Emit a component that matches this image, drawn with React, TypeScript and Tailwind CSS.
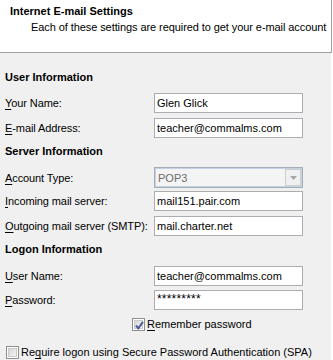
import React from 'react';

const inputBox = 'h-[20px] w-[149px] border border-[#abadb3] bg-white px-[2px] flex items-center';

function Label({ k, rest, pre = '' }: { k: string; rest: string; pre?: string }) {
    return (
        <span>
            {pre}
            <span className="underline underline-offset-[2px]">{k}</span>
            {rest}
        </span>
    );
}

function Row({ label, children, mt }: { label: React.ReactNode; children: React.ReactNode; mt: string }) {
    return (
        <div className={`flex items-center ${mt}`}>
            <div className="w-[149px] shrink-0 tracking-[-0.1px]">{label}</div>
            {children}
        </div>
    );
}

function CheckBox({ checked }: { checked?: boolean }) {
    return (
        <span className="relative w-[13px] h-[13px] border border-[#8e8f8f] bg-white shrink-0 flex items-center justify-center">
            <span className="w-[9px] h-[9px] border border-[#c9cacb] bg-gradient-to-br from-[#d6d7d8] to-[#f4f4f4]" />
            {checked && (
                <svg className="absolute left-[1px] top-[1px]" width="11" height="11" viewBox="0 0 11 11">
                    <path d="M2 5.5 L4.3 8.3 L9 1.8" fill="none" stroke="#4a5f97" strokeWidth="2" />
                </svg>
            )}
        </span>
    );
}

export default function App() {
    return (
        <div className="w-[333px] h-[360px] bg-white overflow-hidden font-['Tahoma','Liberation_Sans',sans-serif] text-[11px] leading-[14px] text-black">
            <div className="w-[332px] h-full flex flex-col">
                {/* Header */}
                <div className="h-[53px] shrink-0 bg-white border-b border-r border-[#a0a0a0] pl-[10px] pt-[4px]">
                    <div className="font-bold">Internet E-mail Settings</div>
                    <div className="pl-[21px] mt-[2px] whitespace-nowrap tracking-[-0.08px]">Each of these settings are required to get your e-mail account</div>
                </div>

                {/* Body */}
                <div className="flex-1 w-[331px] bg-[#f0f0f0] px-[5px] flex flex-col">
                    <div className="font-bold mt-[17px]">User Information</div>
                    <Row mt="mt-[9px]" label={<Label k="Y" rest="our Name:" />}>
                        <div className={inputBox}>Glen Glick</div>
                    </Row>
                    <Row mt="mt-[5px]" label={<Label k="E" rest="-mail Address:" />}>
                        <div className={inputBox}>teacher@commalms.com</div>
                    </Row>

                    <div className="font-bold mt-[6px]">Server Information</div>
                    <Row mt="mt-[9px]" label={<Label k="A" rest="ccount Type:" />}>
                        <div className="h-[21px] w-[149px] border border-[#a7adb5] bg-[#f4f4f4] flex">
                            <div className="flex-1 border border-[#c4d3e3] flex items-center px-[2px] text-[#6d6d6d]">
                                POP3
                                <span className="ml-auto w-[16px] h-[17px] -mr-[2px] border border-[#cfcfcf] bg-[#f0f0f0] flex items-center justify-center">
                                    <svg width="7" height="4" viewBox="0 0 7 4">
                                        <path d="M0 0 H7 L3.5 4 Z" fill="#a6a6a6" />
                                    </svg>
                                </span>
                            </div>
                        </div>
                    </Row>
                    <Row mt="mt-[3px]" label={<Label k="I" rest="ncoming mail server:" />}>
                        <div className={inputBox}>mail151.pair.com</div>
                    </Row>
                    <Row mt="mt-[5px]" label={<Label k="O" rest="utgoing mail server (SMTP):" />}>
                        <div className={inputBox}>mail.charter.net</div>
                    </Row>

                    <div className="font-bold mt-[6px]">Logon Information</div>
                    <Row mt="mt-[10px]" label={<Label k="U" rest="ser Name:" />}>
                        <div className={inputBox}>teacher@commalms.com</div>
                    </Row>
                    <Row mt="mt-[4px]" label={<Label k="P" rest="assword:" />}>
                        <div className={`${inputBox} items-start pt-[1px]`}>
                            <span className="text-[12px] tracking-[0.2px]">*********</span>
                        </div>
                    </Row>

                    <div className="flex items-center gap-[2px] mt-[7px] pl-[127px]">
                        <CheckBox checked />
                        <Label k="R" rest="emember password" />
                    </div>

                    <div className="flex items-center gap-[2px] mt-[14px] pl-[1px]">
                        <CheckBox />
                        <Label pre="Re" k="q" rest="uire logon using Secure Password Authentication (SPA)" />
                    </div>
                </div>
            </div>
        </div>
    );
}
